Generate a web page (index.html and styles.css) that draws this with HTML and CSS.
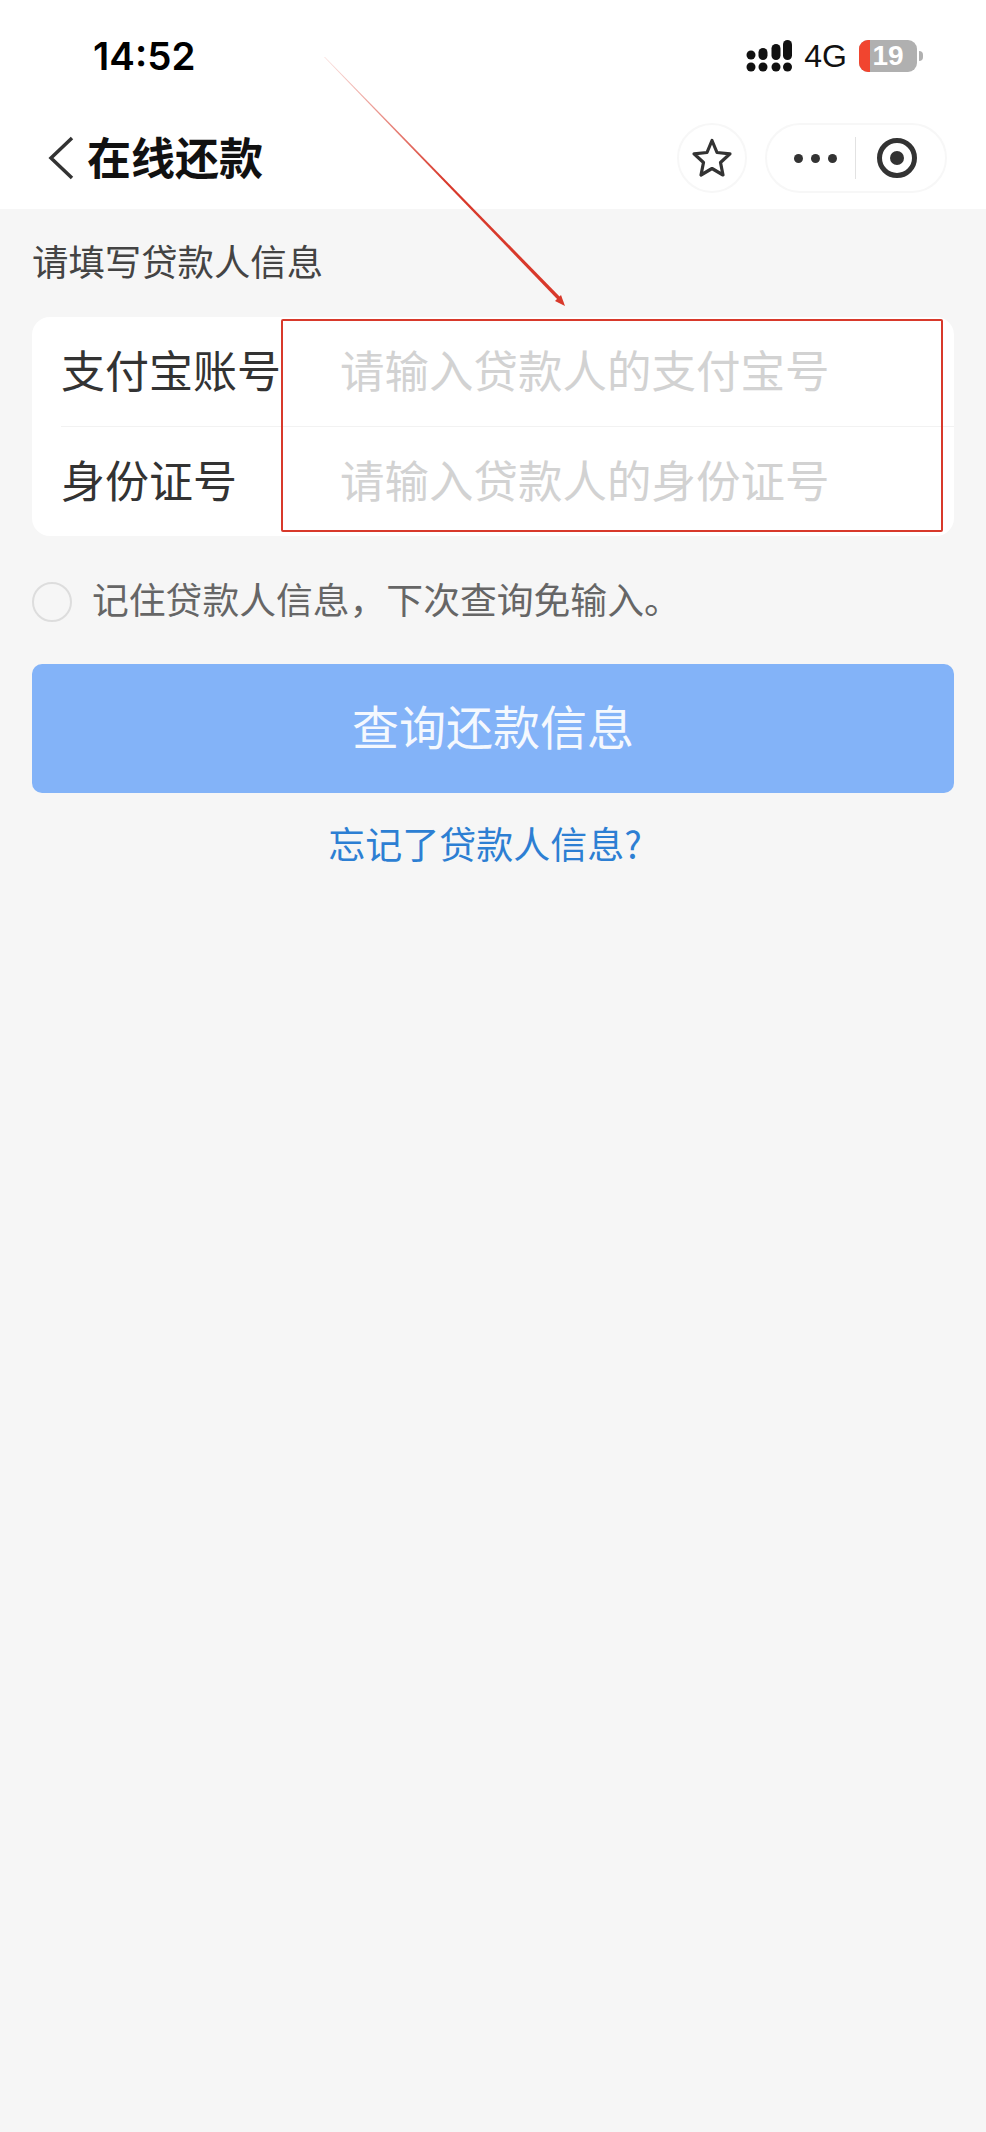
FILE: index.html
```html
<!DOCTYPE html>
<html>
<head>
<title>在线还款</title>
<link rel="stylesheet" href="styles.css">
</head>
<body>
<div class="page">
  <div class="top">
    <div class="status">
      <span class="time">14:52</span>
      <div class="status-right">
        <svg class="signal" width="46" height="33" viewBox="0 0 46 33">
          <circle cx="5" cy="15" r="4.5"/>
          <rect x="12.5" y="8" width="9" height="12" rx="4.5"/>
          <rect x="25.5" y="4" width="9" height="16" rx="4.5"/>
          <rect x="37" y="0" width="9" height="20" rx="4.5"/>
          <circle cx="5" cy="27" r="4.5"/>
          <circle cx="17" cy="27" r="4.5"/>
          <circle cx="30" cy="27" r="4.5"/>
          <circle cx="41.5" cy="27" r="4.5"/>
        </svg>
        <span class="net">4G</span>
        <div class="battery">
          <div class="battery-low"></div>
          <span class="battery-num">19</span>
        </div>
        <div class="battery-nub"></div>
      </div>
    </div>
    <div class="nav">
      <svg class="back" width="26" height="44" viewBox="0 0 26 44">
        <path d="M24 2 L3 22 L24 42" fill="none" stroke="#333" stroke-width="3.5"/>
      </svg>
      <div class="title">在线还款</div>
      <div class="nav-right">
        <div class="fav">
          <svg width="44" height="42" viewBox="0 0 44 42">
            <path d="M22 3.5 L27 15.5 L40 16.8 L30.5 25.5 L33 38 L22 31.5 L11 38 L13.5 25.5 L4 16.8 L17 15.5 Z" fill="none" stroke="#333" stroke-width="3.2" stroke-linejoin="round"/>
          </svg>
        </div>
        <div class="capsule">
          <div class="dots"><i></i><i></i><i></i></div>
          <div class="capsule-line"></div>
          <svg width="44" height="44" viewBox="0 0 44 44">
            <circle cx="22" cy="22" r="17.5" fill="none" stroke="#333" stroke-width="5"/>
            <circle cx="22" cy="22" r="7" fill="#333"/>
          </svg>
        </div>
      </div>
    </div>
  </div>

  <div class="content">
    <div class="heading">请填写贷款人信息</div>
    <div class="card">
      <div class="row">
        <label>支付宝账号</label>
        <span class="placeholder">请输入贷款人的支付宝号</span>
      </div>
      <div class="row row-second">
        <label>身份证号</label>
        <span class="placeholder">请输入贷款人的身份证号</span>
      </div>
    </div>
    <div class="remember">
      <div class="radio"></div>
      <span class="remember-text">记住贷款人信息，下次查询免输入。</span>
    </div>
    <div class="btn">查询还款信息</div>
    <div class="forgot">忘记了贷款人信息?</div>
  </div>

  <!-- red annotation drawn on top of the screenshot -->
  <svg class="arrow" width="986" height="320" viewBox="0 0 986 320">
    <defs>
      <linearGradient id="fade" x1="324" y1="57" x2="564" y2="306" gradientUnits="userSpaceOnUse">
        <stop offset="0" stop-color="#d8392b" stop-opacity="0.15"/>
        <stop offset="0.5" stop-color="#d8392b"/>
      </linearGradient>
    </defs>
    <polygon points="324,57 325,57 562,299 559,301" fill="url(#fade)"/>
    <polygon points="565,306 555,301 561,295" fill="#d8392b"/>
  </svg>
  <div class="red-box"></div>
</div>
</body>
</html>
```
FILE: styles.css
```css
* {
  box-sizing: border-box;
}
body {
  margin: 0;
  background: #f6f6f6;
  font-family: "Noto Sans CJK SC", "Noto Sans", sans-serif;
}
.page {
  position: relative;
  width: 986px;
  height: 2132px;
  overflow: hidden;
}
.top {
  background: #fff;
  height: 209px;
}
.status {
  height: 112px;
  display: flex;
  align-items: center;
  justify-content: space-between;
  padding: 0 63px 0 93px;
}
.time {
  font-family: Inter, "Liberation Sans", sans-serif;
  font-size: 38.5px;
  font-weight: 600;
  color: #000;
}
.status-right {
  display: flex;
  align-items: center;
}
.signal {
  fill: #111;
}
.net {
  font-family: "Liberation Sans", sans-serif;
  font-size: 32px;
  color: #111;
  margin-left: 12px;
}
.battery {
  position: relative;
  width: 58px;
  height: 32px;
  margin-left: 12px;
  background: #b0b0b0;
  border-radius: 9px;
  overflow: hidden;
  text-align: center;
}
.battery-low {
  position: absolute;
  left: 0;
  top: 0;
  bottom: 0;
  width: 11px;
  background: #f1452f;
}
.battery-num {
  position: relative;
  font-family: "Liberation Sans", sans-serif;
  font-size: 28px;
  font-weight: 700;
  line-height: 32px;
  color: #fff;
}
.battery-nub {
  width: 4px;
  height: 10px;
  margin-left: 2px;
  background: #b0b0b0;
  border-radius: 0 5px 5px 0;
}
.nav {
  height: 97px;
  display: flex;
  align-items: center;
  padding: 0 39px 5px 48px;
}
.title {
  font-size: 44px;
  font-weight: 700;
  color: #111;
  margin-left: 13px;
  line-height: 60px;
  padding-bottom: 4px;
}
.nav-right {
  margin-left: auto;
  display: flex;
  align-items: center;
  gap: 18px;
}
.fav {
  width: 70px;
  height: 70px;
  border: 2px solid #f7f7f7;
  border-radius: 50%;
  display: flex;
  align-items: center;
  justify-content: center;
}
.capsule {
  width: 182px;
  height: 70px;
  border: 2px solid #f7f7f7;
  border-radius: 35px;
  display: flex;
  align-items: center;
  padding-left: 27px;
}
.dots {
  display: flex;
  gap: 8px;
}
.dots i {
  width: 9px;
  height: 9px;
  border-radius: 50%;
  background: #333;
}
.capsule-line {
  width: 1px;
  height: 42px;
  background: #e2e2e2;
  margin: 0 19px 0 18px;
}
.content {
  padding: 33px 32px 0;
}
.heading {
  font-size: 36.4px;
  line-height: 36px;
  color: #444;
  margin-bottom: 39px;
}
.card {
  background: #fff;
  border-radius: 18px;
  height: 219px;
  padding-left: 29px;
}
.row {
  height: 109px;
  display: flex;
  align-items: center;
  padding-bottom: 6px;
}
.row-second {
  height: 110px;
  border-top: 1px solid #f2f2f2;
}
.row label {
  width: 279px;
  font-size: 44px;
  color: #333;
}
.placeholder {
  font-size: 44.5px;
  color: #d2d2d2;
}
.remember {
  display: flex;
  align-items: center;
  margin-top: 46px;
  height: 40px;
  font-size: 36.8px;
  color: #666;
}
.remember-text {
  padding-bottom: 9px;
}
.radio {
  width: 40px;
  height: 40px;
  border: 2px solid #ddd;
  border-radius: 50%;
  margin-right: 20px;
}
.btn {
  margin-top: 42px;
  height: 129px;
  padding-bottom: 8px;
  background: #83b3f8;
  border-radius: 10px;
  color: #f4f8fe;
  font-size: 47px;
  display: flex;
  align-items: center;
  justify-content: center;
}
.forgot {
  margin-top: 25px;
  padding-right: 16px;
  text-align: center;
  font-size: 37px;
  line-height: 50px;
  color: #2d7fd3;
}
.arrow {
  position: absolute;
  left: 0;
  top: 0;
}
.red-box {
  position: absolute;
  left: 281px;
  top: 319px;
  width: 662px;
  height: 213px;
  border: 2px solid #d8392b;
  border-radius: 2px;
}
```
